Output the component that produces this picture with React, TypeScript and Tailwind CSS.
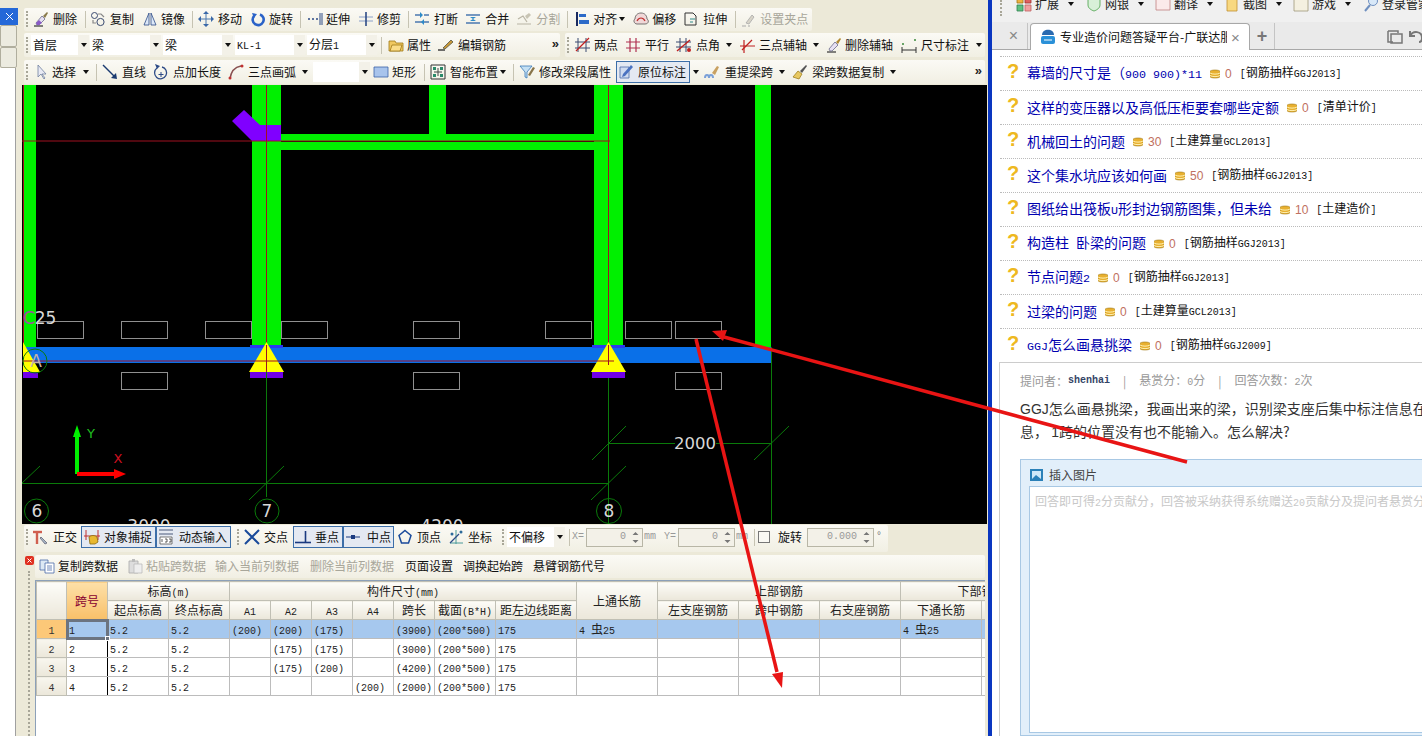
import React from "react";

const s = (d: string, c = "#2c4a86", w = 1.2) => <path d={d} stroke={c} strokeWidth={w} fill="none" />;
const f = (d: string, c: string, st = "none") => <path d={d} fill={c} stroke={st} strokeWidth={0.8} />;

const ic: Record<string, React.ReactNode> = {
  del: <>{s("M1 15h9", "#333")}{f("M3 12l6-7 3 3-6 6H4z", "#e6e0f2", "#6a6a8a")}{f("M3 12l3-3 3 3-3 2H4z", "#8a5ac8")}{f("M10 5l4-4 1 1-3 5z", "#8a7a4a")}</>,
  copy: <><circle cx="4.5" cy="4.5" r="3" stroke="#3a4a70" />{s("M8 3h3l3 3", "#888")}<circle cx="10.5" cy="11" r="3.6" stroke="#3a4a70" />{s("M3 9v3h3", "#888")}</>,
  mirror: <>{f("M7 2L2 14h5z", "#dce8f8", "#2c4a86")}{f("M9 2l5 12H9z", "#dce8f8", "#2c4a86")}</>,
  move: <>{s("M8 2v12M2 8h12", "#4a78b0", 1)}{f("M8 0l3 3H5zM8 16l-3-3h6zM0 8l3-3v6zM16 8l-3 3V5z", "#3a68a8")}</>,
  rotate: <>{s("M4 5a5.5 5.5 0 1 0 6-1.6", "#2a62c8", 2.6)}{f("M2 2l5 1-3 4z", "#2a62c8")}</>,
  extend: <>{s("M1 8h2M5 8h2M9 8h2", "#2c4a86", 1.6)}{s("M13 2v12M15 2v12", "#2c4a86", 1)}</>,
  trim: <>{s("M1 6h14M1 10h14", "#8aa0c8", 1)}{s("M8 1v14", "#2c4a86", 1.6)}</>,
  brk: <>{s("M1 4h5M10 4h5M1 11h14", "#4a78b0", 1.5)}{f("M6 1l3 3-3 3zM10 8l-3 3 3 3z", "#2c8ac8")}</>,
  merge: <>{s("M1 4h14M1 12h14", "#4a78b0", 1.5)}{f("M5 6l3 2 3-2zM5 10l3-2 3 2z", "#2c8ac8")}</>,
  split: <>{s("M1 13h14M2 8l5-3 4 6", "#b8b4a4", 1.2)}{f("M9 5l4-3 2 2-4 4z", "#c8c4b4")}</>,
  align: <>{f("M2 1h2v14H2z", "#1a2a60")}{f("M5 3h7v3H5z", "#2c6ac8")}{f("M5 9h10v4H5z", "#2c6ac8")}</>,
  offset: <>{f("M8 2c4 0 6 3 6 6 2 1 2 5-2 5H4c-3 0-4-4-2-5 0-3 2-6 6-6z", "#f0d8d8", "#555")}{s("M4 10c2-4 6-4 8 0", "#c03030")}</>,
  stretch: <>{s("M2 2h8l3 3v9H2z", "#333", 1)}{s("M7 8h5M7 11h3", "#2c8a8a", 1)}</>,
  grip: <>{s("M1 15h4M7 15h2", "#aaa")}{f("M5 12l6-8 2 2-5 7z", "#d8d4c8", "#aaa")}</>,
  attr: <>{f("M1 4h6l1 2h7v8H1z", "#f0c860", "#a07818")}{f("M4 8h10l-2 6H2z", "#fadc88", "#a07818")}</>,
  rebar: <>{s("M0 13h7", "#333", 1.4)}{f("M5 11l8-8 2 2-8 7z", "#c89838", "#554")}</>,
  twop: <>{s("M3 1v14M11 1v14M0 5h15M0 11h15", "#3a4a70", 1)}{s("M1 14L14 1", "#c02020", 1.2)}</>,
  par: <>{s("M5 1v14M11 1v14M1 5h14M1 11h14", "#b03050", 1.2)}</>,
  ang: <>{s("M4 1v14M10 1v14M0 5h15M0 10h15", "#3a4a70", 1)}{s("M1 14L14 3", "#c02020", 1.4)}<circle cx="13" cy="13" r="2" fill="#c02020" /></>,
  tri: <>{s("M5 3v13M1 9h15", "#c02020", 1.2)}{s("M3 13L13 3", "#c02020", 1.2)}</>,
  delaxis: <>{s("M1 15h9", "#333")}{f("M3 12l6-7 3 3-6 6H4z", "#e6e0f2", "#6a6a8a")}{f("M10 5l4-4 1 1-3 5z", "#b08830")}</>,
  dim: <>{s("M1 13h14M1 10v6M15 10v6", "#333", 1)}<circle cx="2" cy="7" r="1" fill="#3a8a3a" /><circle cx="14" cy="3" r="1" fill="#3a8a3a" /></>,
  select: <>{f("M4 1v12l3-3 3 5 1-1-3-4h4z", "#e8eaf4", "#7080a0")}</>,
  line: <>{s("M1 1l12 12", "#1a3a70", 1.4)}{f("M15 15l-6-1 5-5z", "#1a3a70")}</>,
  ptlen: <>{s("M4 4a6 6 0 1 0 5-1", "#2c4a86", 1.3)}{f("M2 0l5 2-3 3z", "#2c4a86")}{s("M8 8v5M5.5 10.5h5", "#2c4a86", 1)}</>,
  arc: <>{s("M2 15C3 7 7 3 13 2", "#885050", 1.5)}<circle cx="2" cy="14" r="1.5" fill="#c03030" /><circle cx="14" cy="2" r="1.5" fill="#c03030" /></>,
  rect: <>{f("M1 3h14v10H1z", "#a8c4ec", "#3a62a8")}</>,
  smart: <>{s("M1 1h14v14H1z", "#333", 1)}{f("M3 3h3v3H3zM10 3h3v3h-3zM3 10h3v3H3zM10 10h3v3h-3z", "#2a8a6a")}{s("M8 4v8M4 8h8", "#444", 1)}</>,
  filter: <>{f("M1 2h12L8 8v6l-2-1V8z", "#c4e0f4", "#3a7ab8")}{f("M9 11l5-8 2 1-5 8z", "#88744a")}</>,
  mark: <>{f("M2 3h9v11H2z", "#d0dcf0", "#4a6aa8")}{f("M5 10l8-9 2 2-8 9-3 1z", "#4a72c0")}</>,
  span: <>{s("M1 14c0-4 4-4 4 0M5 14c0-4 4-4 4 0", "#7aa0d8", 2)}{f("M8 9l5-7 2 1-4 8z", "#c8a060")}</>,
  broom: <>{f("M1 13l5-6 4 3-3 5z", "#e8c860", "#a08020")}{f("M8 7l6-6 1 1-5 7z", "#555")}</>,
  ortho: <>{s("M4 4v11", "#d06050", 2.4)}{s("M0 3h9", "#d06050", 2.4)}{f("M8 8l6 6-2 1-5-6z", "#a8b8c8", "#667")}</>,
  snap: <>{s("M2 1v10M14 1v10M0 7h16", "#c03030", 1)}{f("M5 8c2-2 6-2 8 0l1 5-3 2H6z", "#e8b830", "#8a6a10")}</>,
  dyn: <>{s("M1 1h14M1 5h14", "#4a5a7a", 1.2)}{f("M2 8h12v7H2z", "#fff", "#555")}{s("M4 13v-3M7 10h2v3H7M11 10h2v3h-2", "#333", 0.8)}</>,
  cross: <>{s("M1 1l14 14M15 1L1 15", "#1a4a9a", 2)}</>,
  perp: <>{s("M0 13.5h16", "#1a3a80", 1.6)}{s("M10.5 2v11", "#1a3a80", 1.6)}</>,
  mid: <>{s("M1 8h14", "#1a3a80", 1)}{f("M6 6h4v4H6z", "#1a3a80")}</>,
  vert: <>{s("M8 1.5l6 5-2.5 7.5h-7L2 6.5z", "#1a4a9a", 1.5)}</>,
  coord: <>{s("M2 14h13M8 1v14", "#4a9a9a", 1)}{s("M2 14l9-9", "#2c4a86", 1.2)}<circle cx="13" cy="3" r="1.5" fill="#2c6a9a" /><circle cx="4" cy="5" r="1.5" fill="#2c6a9a" /></>,
  pcopy: <>{f("M1 2h8v10H1z", "#dce8f4", "#4a6aa8")}{f("M6 5h9v10H6z", "#fff", "#4a6aa8")}{s("M8 8h5M8 10h5M8 12h5", "#4a6aa8", 0.8)}</>,
  paste: <>{f("M2 3h9v12H2z", "#ddd", "#aaa")}{f("M5 1h3v3H5z", "#bbb")}{f("M7 6h8v9H7z", "#eee", "#bbb")}</>,
};

const Ico = ({ n }: { n: string }) => (
  <svg className="w-4 h-4 shrink-0" viewBox="0 0 16 16" fill="none">{ic[n]}</svg>
);

const Tx = ({ t }: { t: string }) => (
  <>
    {t.split(/([\x20-\x7e]+)/).map((p, i) =>
      /^[\x20-\x7e]+$/.test(p) ? (
        <span key={i} className="font-['Liberation_Mono'] text-[0.833em] whitespace-pre">{p}</span>
      ) : (
        <span key={i}>{p}</span>
      )
    )}
  </>
);

const Cell = ({ t }: { t: string }) => (
  <div className="h-[18px] leading-[17px] overflow-hidden whitespace-nowrap"><Tx t={t} /></div>
);

const Grip = ({ c = "" }: { c?: string }) => <div className={`w-[2px] h-[16px] shrink-0 border-l-2 border-dotted border-[#a8a698] ${c}`} />;
const Sep = ({ c = "" }: { c?: string }) => <div className={`w-px h-[17px] shrink-0 bg-[#c6c3b2] ${c}`} />;
const Caret = ({ c = "" }: { c?: string }) => (
  <svg className={`w-2 h-2 shrink-0 ${c}`} viewBox="0 0 8 8"><path d="M1 2h6L4 6z" fill="#111" /></svg>
);
const T = ({ i, t, c = "", dis }: { i: string; t: string; c?: string; dis?: boolean }) => (
  <div className={`flex items-center shrink-0 whitespace-nowrap ${dis ? "text-[#a8a69a]" : "text-[#111]"} ${c}`}>
    <Ico n={i} />
    <span>{t}</span>
  </div>
);
const Sel = ({ t, c }: { t: string; c: string }) => (
  <div className={`flex h-[20px] items-center shrink-0 bg-white ${c}`}>
    <span className="flex-1 pl-[2px] text-[#111] whitespace-nowrap"><Tx t={t} /></span>
    <div className="w-[11px] h-full flex items-center justify-center bg-[#f3f1e8]"><Caret /></div>
  </div>
);
const Chev = ({ c = "" }: { c?: string }) => (
  <span className={`font-['Liberation_Sans'] font-bold text-[13px] leading-none mb-1 text-[#222] ${c}`}>»</span>
);
const Btn = ({ i, t, c }: { i: string; t: string; c: string }) => (
  <div className={`flex items-center h-[22px] shrink-0 whitespace-nowrap border border-[#3c6ea8] bg-[#e4e9f2] text-[#111] ${c}`}>
    <Ico n={i} />
    <span>{t}</span>
  </div>
);
const Spin = ({ v, c }: { v: string; c: string }) => (
  <div className={`flex items-center h-[19px] shrink-0 border border-[#b8b6a6] bg-[#f3f1e8] text-[#999] ${c}`}>
    <span className="flex-1 text-right font-['Liberation_Mono'] text-[10px]">{v}</span>
    <svg className="w-[13px] h-[15px] ml-[3px]" viewBox="0 0 13 15"><path d="M6.5 2l3 3h-6zM6.5 13l-3-3h6z" fill="#777" /></svg>
  </div>
);

const bar = "bg-linear-to-b from-[#fbfaf5] to-[#f1efe3] rounded-[2px]";

function Sliver() {
  return (
    <div className="w-[22px] shrink-0 flex flex-col">
      <div className="h-[8px]" />
      <div className="w-[18px] h-[17px] bg-[#2468d8] text-white flex items-center justify-center">
        <svg className="w-[9px] h-[9px]" viewBox="0 0 9 9"><path d="M1 1l7 7M8 1L1 8" stroke="#fff" /></svg>
      </div>
      <div className="w-[17px] h-[22px] bg-[#ecebe0] border border-[#b0ae9e] rounded-[2px]" />
      <div className="w-[17px] h-[21px] bg-[#ecebe0] border border-[#b0ae9e] rounded-[2px]" />
      <div className="w-[16px] flex-1 bg-white border-r border-[#a0a0a0]" />
    </div>
  );
}

function Toolbars() {
  return (
    <div className="h-[85px] pt-[8px] flex flex-col pl-[2px]">
      <div className={`h-[23px] pb-[1px] w-[788px] flex items-center ${bar}`}>
        <Grip c="ml-[2px]" />
        <T i="del" t="删除" c="ml-[5px] gap-[4px]" />
        <Sep c="ml-[8px]" />
        <T i="copy" t="复制" c="ml-[4px] gap-[4px]" />
        <T i="mirror" t="镜像" c="ml-[8px] gap-[3px]" />
        <Sep c="ml-[7px]" />
        <T i="move" t="移动" c="ml-[5px] gap-[4px]" />
        <T i="rotate" t="旋转" c="ml-[8px] gap-[3px]" />
        <Sep c="ml-[7px]" />
        <T i="extend" t="延伸" c="ml-[6px] gap-[3px]" />
        <T i="trim" t="修剪" c="ml-[8px] gap-[3px]" />
        <Sep c="ml-[7px]" />
        <T i="brk" t="打断" c="ml-[5px] gap-[4px]" />
        <T i="merge" t="合并" c="ml-[7px] gap-[4px]" />
        <T i="split" t="分割" c="ml-[7px] gap-[4px]" dis />
        <Sep c="ml-[7px]" />
        <T i="align" t="对齐" c="ml-[6px] gap-[3px]" />
        <Caret c="ml-[1px]" />
        <T i="offset" t="偏移" c="ml-[7px] gap-[3px]" />
        <T i="stretch" t="拉伸" c="ml-[7px] gap-[4px]" />
        <Sep c="ml-[8px]" />
        <T i="grip" t="设置夹点" c="ml-[5px] gap-[3px]" dis />
      </div>
      <div className="h-[24px] mt-[2px] flex">
        <div className={`w-[536px] flex items-center ${bar}`}>
          <Grip c="ml-[2px]" />
          <Sel t="首层" c="ml-[3px] w-[58px]" />
          <Sel t="梁" c="ml-[1px] w-[71px]" />
          <Sel t="梁" c="ml-[2px] w-[70px]" />
          <Sel t="KL-1" c="ml-[2px] w-[70px]" />
          <Sel t="分层1" c="ml-[2px] w-[70px]" />
          <Sep c="ml-[4px]" />
          <T i="attr" t="属性" c="ml-[6px] gap-[3px]" />
          <T i="rebar" t="编辑钢筋" c="ml-[7px] gap-[4px]" />
          <Chev c="ml-auto mr-[1px]" />
        </div>
        <div className={`w-[420px] ml-[5px] flex items-center ${bar}`}>
          <Grip c="ml-[2px]" />
          <T i="twop" t="两点" c="ml-[6px] gap-[3px]" />
          <T i="par" t="平行" c="ml-[7px] gap-[4px]" />
          <T i="ang" t="点角" c="ml-[7px] gap-[4px]" />
          <Caret c="ml-[5px]" />
          <T i="tri" t="三点辅轴" c="ml-[6px] gap-[4px]" />
          <Caret c="ml-[5px]" />
          <T i="delaxis" t="删除辅轴" c="ml-[6px] gap-[3px]" />
          <T i="dim" t="尺寸标注" c="ml-[8px] gap-[4px]" />
          <Caret c="ml-[6px]" />
        </div>
      </div>
      <div className={`h-[24px] mt-[3px] w-[961px] flex items-center ${bar}`}>
        <Grip c="ml-[2px]" />
        <T i="select" t="选择" c="ml-[6px] gap-[2px]" />
        <Caret c="ml-[6px]" />
        <Sep c="ml-[6px]" />
        <T i="line" t="直线" c="ml-[5px] gap-[4px]" />
        <T i="ptlen" t="点加长度" c="ml-[7px] gap-[4px]" />
        <T i="arc" t="三点画弧" c="ml-[7px] gap-[4px]" />
        <Caret c="ml-[5px]" />
        <Sel t="" c="ml-[4px] w-[57px]" />
        <T i="rect" t="矩形" c="ml-[3px] gap-[3px]" />
        <Sep c="ml-[8px]" />
        <T i="smart" t="智能布置" c="ml-[5px] gap-[4px]" />
        <Caret c="ml-[1px]" />
        <Sep c="ml-[6px]" />
        <T i="filter" t="修改梁段属性" c="ml-[5px] gap-[4px]" />
        <Btn i="mark" t="原位标注" c="ml-[5px] w-[74px] gap-[4px] pl-[1px]" />
        <Caret c="ml-[2px]" />
        <T i="span" t="重提梁跨" c="ml-[4px] gap-[5px]" />
        <Caret c="ml-[5px]" />
        <T i="broom" t="梁跨数据复制" c="ml-[6px] gap-[4px]" />
        <Caret c="ml-[5px]" />
        <Chev c="ml-auto mr-[3px]" />
      </div>
    </div>
  );
}

const GREEN = "#00f000";
const GL = "#0a7a0a";
const RL = "#a01020";

function Canvas() {
  const rectsTop = [37, 121, 205, 281, 413, 545, 625, 675];
  const rectsBot = [121, 413, 675];
  return (
    <svg className="block w-[965px] h-[439px] bg-black" viewBox="22 85 965 439">
      {[[23, 13], [252, 29], [594, 29], [755, 16]].map(([x, w]) => (
        <rect key={x} x={x} y={85} width={w} height={262} fill={GREEN} />
      ))}
      <rect x={429} y={85} width={17} height={50} fill={GREEN} />
      <rect x={281} y={134} width={313} height={7} fill={GREEN} />
      <rect x={281} y={142} width={313} height={8} fill={GREEN} />
      <path d="M232 121l12-11 16 15h21v16h-29z" fill="#8000ff" />
      <path d="M22 141h588" stroke={RL} />
      <path d="M266.5 85v260M608.5 85v260M23.5 85v260" stroke={RL} />
      <rect x={36} y={347} width={735} height={16} fill="#0a70e8" />
      <rect x={23} y={347} width={13} height={16} fill="#0a70e8" />
      {[250, 592].map((x) => (<rect key={x} x={x} y={345} width={33} height={3} fill="#2a3af0" />))}
      {[249, 591].map((x) => (
        <g key={x}>
          <path d={`M${x + 17.5} 342L${x + 35} 372H${x}z`} fill="#ffff00" />
          <rect x={x + 1} y={372} width={33} height={6} fill="#7000e8" />
        </g>
      ))}
      <path d="M23 342l17 30H23z" fill="#ffff00" />
      <rect x={23} y={372} width={15} height={6} fill="#7000e8" />
      <path d="M22 361h592" stroke={RL} />
      <path d="M266.5 345v27M608.5 345v20" stroke={RL} />
      {rectsTop.map((x) => (<rect key={x} x={x + 0.5} y={321.5} width={46} height={17} fill="none" stroke="#909090" />))}
      {rectsBot.map((x) => (<rect key={x} x={x + 0.5} y={372.5} width={46} height={17} fill="none" stroke="#909090" />))}
      <g stroke={GL} fill="none">
        <path d="M266.5 372v125M608.5 378v146M771.5 347v177" />
        <path d="M22 483.5h586M608 443.5h67M716 443.5h55" />
        <path d="M22 483l18-17M249 500l35-34M591 500l35-34M592 460l34-34M754 460l35-34" />
        <circle cx="35" cy="361" r="12" />
        <circle cx="36.5" cy="511" r="12" />
        <circle cx="267" cy="511" r="12" />
        <circle cx="609" cy="511" r="12.5" />
      </g>
      <g fontFamily="DejaVu Sans" textAnchor="middle" fill="#d8d8d8">
        <text x="36" y="367" fontSize="17" fill="#c0b0a8">A</text>
        <text x="37" y="517" fontSize="17">6</text>
        <text x="267" y="517" fontSize="17">7</text>
        <text x="609" y="517" fontSize="17">8</text>
        <text x="695" y="449" fontSize="16.5">2000</text>
        <text x="149" y="532" fontSize="17">3000</text>
        <text x="442" y="532" fontSize="17">4200</text>
        <text x="29" y="324" fontSize="18" fill="#a050a0">C</text>
        <text x="45.5" y="324" fontSize="17">25</text>
        <text x="91" y="438" fontSize="13" fill="#20c020">Y</text>
        <text x="118" y="463" fontSize="13" fill="#d01020">X</text>
      </g>
      <rect x={75} y={436} width={4} height={38} fill={GREEN} />
      <path d="M77 425l-4 12h8z" fill={GREEN} />
      <rect x={77} y={472} width={38} height={4} fill="#ff0000" />
      <path d="M126 474l-12-5v10z" fill="#ff0000" />
    </svg>
  );
}

function SnapBar() {
  return (
    <div className="h-[27px] mt-[1px] flex items-center ml-[2px]">
      <div className={`h-full w-[864px] pb-[3px] flex items-center ${bar}`}>
        <Grip c="ml-[2px]" />
        <T i="ortho" t="正交" c="ml-[5px] gap-[4px]" />
        <Btn i="snap" t="对象捕捉" c="ml-[4px] w-[75px] gap-[4px] pl-[2px]" />
        <Btn i="dyn" t="动态输入" c="w-[75px] gap-[5px] pl-[1px]" />
        <Grip c="ml-[6px]" />
        <T i="cross" t="交点" c="ml-[5px] gap-[4px]" />
        <Btn i="perp" t="垂点" c="ml-[5px] w-[50px] gap-[4px] pl-[1px]" />
        <Btn i="mid" t="中点" c="w-[51px] gap-[6px] pl-[1px]" />
        <T i="vert" t="顶点" c="ml-[3px] gap-[4px]" />
        <T i="coord" t="坐标" c="ml-[7px] gap-[4px]" />
        <Grip c="ml-[10px]" />
        <Sel t="不偏移" c="ml-[3px] w-[58px]" />
        <Sep c="ml-[4px]" />
        <span className="ml-[2px] w-[12px] text-[#999] font-['Liberation_Mono'] text-[10px]">X=</span>
        <Spin v="0" c="ml-[2px] w-[57px]" />
        <span className="w-[14px] ml-[1px] text-[#999] font-['Liberation_Mono'] text-[10px]">mm</span>
        <span className="ml-[6px] w-[12px] text-[#999] font-['Liberation_Mono'] text-[10px]">Y=</span>
        <Spin v="0" c="ml-[2px] w-[57px]" />
        <span className="w-[14px] ml-[1px] text-[#999] font-['Liberation_Mono'] text-[10px]">mm</span>
        <Sep c="ml-[4px]" />
        <div className="ml-[3px] w-[12px] h-[12px] border border-[#777] bg-[#faf9f4] shrink-0" />
        <span className="ml-[8px] text-[#111] shrink-0">旋转</span>
        <Spin v="0.000" c="ml-[5px] w-[67px]" />
        <span className="ml-[2px] text-[#777] text-[10px] font-['Liberation_Mono']">°</span>
      </div>
    </div>
  );
}

const th = "border border-[#c0bfb4] bg-linear-to-b from-[#fdfcf8] to-[#ebe7da] font-normal text-[#222] text-center p-0 overflow-hidden whitespace-nowrap";
const td = "border border-[#bcbcbc] p-0 pl-[2px] text-[#222] overflow-hidden whitespace-nowrap";
const rows = [
  ["1", "5.2", "5.2", "(200)", "(200)", "(175)", "", "(3900)", "(200*500)", "175", "4 虫25", "", "", "", "4 虫25", ""],
  ["2", "5.2", "5.2", "", "(175)", "(175)", "", "(3000)", "(200*500)", "175", "", "", "", "", "", ""],
  ["3", "5.2", "5.2", "", "(175)", "(200)", "", "(4200)", "(200*500)", "175", "", "", "", "", "", ""],
  ["4", "5.2", "5.2", "", "", "", "(200)", "(2000)", "(200*500)", "175", "", "", "", "", "", ""],
];

function Grid() {
  return (
    <div className="mt-[2px] flex-1 bg-white border-t border-l border-[#8ca0b8] overflow-hidden">
      <table className="table-fixed border-collapse w-[1026px] text-[12px]">
        <colgroup>
          <col className="w-[30px]" />
          <col className="w-[41px]" />
          <col className="w-[61px]" />
          <col className="w-[61px]" />
          <col className="w-[41px]" />
          <col className="w-[41px]" />
          <col className="w-[41px]" />
          <col className="w-[41px]" />
          <col className="w-[41px]" />
          <col className="w-[61px]" />
          <col className="w-[81px]" />
          <col className="w-[81px]" />
          <col className="w-[81px]" />
          <col className="w-[81px]" />
          <col className="w-[81px]" />
          <col className="w-[81px]" />
          <col className="w-[81px]" />
        </colgroup>
        <thead>
          <tr className="h-[19px]">
            <th rowSpan={2} className={th} />
            <th rowSpan={2} className="border border-[#c0bfb4] bg-linear-to-b from-[#fde0a8] to-[#f8c068] font-normal text-[#880030] p-0">跨号</th>
            <th colSpan={2} className={th}><Cell t="标高(m)" /></th>
            <th colSpan={7} className={th}><Cell t="构件尺寸(mm)" /></th>
            <th rowSpan={2} className={th}>上通长筋</th>
            <th colSpan={3} className={th}><Cell t="上部钢筋" /></th>
            <th colSpan={2} className={th}><Cell t="下部钢筋" /></th>
          </tr>
          <tr className="h-[19px]">
            {["起点标高", "终点标高", "A1", "A2", "A3", "A4", "跨长", "截面(B*H)", "距左边线距离", "左支座钢筋", "跨中钢筋", "右支座钢筋", "下通长筋", ""].map((h, i) => (
              <th key={i} className={th}><Cell t={h} /></th>
            ))}
          </tr>
        </thead>
        <tbody>
          {rows.map((r, ri) => (
            <tr key={ri} className={`h-[19px] ${ri === 0 ? "bg-[#a6c8ee]" : "bg-white"}`}>
              <td className={`border border-[#c0bfb4] p-0 text-center text-[#333] ${ri === 0 ? "bg-[#fcc878]" : "bg-linear-to-b from-[#f8f6ee] to-[#ebe7da]"}`}>
                <Cell t={String(ri + 1)} />
              </td>
              {r.map((v, i) => (
                <td
                  key={i}
                  className={
                    i === 0
                      ? ri === 0
                        ? "p-0 pl-[2px] relative outline-[3px] -outline-offset-2 outline-[#6c7480] text-[#222]"
                        : `${td} border-r-black`
                      : td
                  }
                >
                  <Cell t={v} />
                  {i === 0 && ri === 0 && <div className="absolute -right-[3px] -bottom-[3px] w-[5px] h-[5px] bg-[#6c7480] border border-white" />}
                </td>
              ))}
              <td className={td} />
            </tr>
          ))}
        </tbody>
      </table>
    </div>
  );
}

function Panel() {
  return (
    <div className="mt-[3px] flex-1 flex min-h-0">
      <div className="w-[13px] shrink-0 flex flex-col items-center pl-[1px]">
        <svg className="w-[9px] h-[9px] mt-px" viewBox="0 0 9 9">
          <rect width="9" height="9" rx="2" fill="#e03020" />
          <path d="M2.5 2.5l4 4M6.5 2.5l-4 4" stroke="#fff" />
        </svg>
        <div className="w-[2px] flex-1 mt-[6px] border-l-2 border-dotted border-[#a8a698]" />
      </div>
      <div className="w-[950px] shrink-0 flex flex-col min-h-0">
        <div className={`h-[23px] pb-[1px] shrink-0 flex items-center ${bar}`}>
          <T i="pcopy" t="复制跨数据" c="ml-[4px] gap-[3px]" />
          <T i="paste" t="粘贴跨数据" c="ml-[9px] gap-[3px]" dis />
          <span className="ml-[9px] text-[#a8a69a]">输入当前列数据</span>
          <span className="ml-[11px] text-[#a8a69a]">删除当前列数据</span>
          <span className="ml-[11px] text-[#111]">页面设置</span>
          <span className="ml-[10px] text-[#111]">调换起始跨</span>
          <span className="ml-[10px] text-[#111]">悬臂钢筋代号</span>
        </div>
        <Grid />
      </div>
    </div>
  );
}

const BT = ({ ic: icon, t, c = "" }: { ic: React.ReactNode; t: string; c?: string }) => (
  <div className={`flex items-center shrink-0 whitespace-nowrap text-[#222] gap-[3px] ${c}`}>
    <svg className="w-4 h-4 shrink-0" viewBox="0 0 16 16" fill="none">{icon}</svg>
    <span>{t}</span>
  </div>
);

const Coin = () => (
  <svg className="w-[10px] h-[10px] shrink-0" viewBox="0 0 10 10">
    <path d="M0 2.5C0 .5 10 .5 10 2.5v5c0 2-10 2-10 0z" fill="#e8b030" stroke="#a07818" strokeWidth="0.6" />
    <path d="M0 4c2 1.5 8 1.5 10 0M0 6.5c2 1.5 8 1.5 10 0" stroke="#fff0b0" strokeWidth="1" fill="none" />
  </svg>
);

const qs = [
  ["幕墙的尺寸是（900 900)*11", "0", "[钢筋抽样GGJ2013]"],
  ["这样的变压器以及高低压柜要套哪些定额", "0", "[清单计价]"],
  ["机械回土的问题", "30", "[土建算量GCL2013]"],
  ["这个集水坑应该如何画", "50", "[钢筋抽样GGJ2013]"],
  ["图纸给出筏板U形封边钢筋图集，但未给", "10", "[土建造价]"],
  ["构造柱 卧梁的问题", "0", "[钢筋抽样GGJ2013]"],
  ["节点问题2", "0", "[钢筋抽样GGJ2013]"],
  ["过梁的问题", "0", "[土建算量GCL2013]"],
  ["GGJ怎么画悬挑梁", "0", "[钢筋抽样GGJ2009]"],
];

function Browser() {
  return (
    <div className="flex-1 min-w-0 flex flex-col bg-white overflow-hidden">
      <div className="h-[22px] shrink-0 bg-[#f0f0f0] overflow-hidden">
        <div className="h-[8px] flex items-center">
          <Grip c="ml-[8px] mt-[8px]" />
          <BT c="ml-[14px]" ic={<>{f("M1 1h6v6H1z", "#f0b040", "#a07818")}{f("M9 1h6v6H9z", "#e06060", "#a03030")}{f("M1 9h6v6H1z", "#60c080", "#308050")}{f("M9 9h6v6H9z", "#f0a0a0", "#c06060")}</>} t="扩展" />
          <Caret c="ml-[8px]" />
          <BT c="ml-[11px]" ic={<>{f("M8 1l6 2v6c0 3-3 5-6 6-3-1-6-3-6-6V3z", "#d8f0d8", "#48a048")}</>} t="网银" />
          <Caret c="ml-[8px]" />
          <BT c="ml-[10px]" ic={<>{f("M1 2h14v12H1z", "#fbeaea", "#c08080")}</>} t="翻译" />
          <Caret c="ml-[8px]" />
          <BT c="ml-[10px]" ic={<>{f("M3 1h10v14H3z", "#f8d880", "#c09030")}</>} t="截图" />
          <Caret c="ml-[8px]" />
          <BT c="ml-[10px]" ic={<>{f("M1 1h14v14H1z", "#f4f0e0", "#a09878")}</>} t="游戏" />
          <Caret c="ml-[8px]" />
          <BT c="ml-[11px]" ic={<><circle cx="10" cy="5" r="4.5" fill="#d8e8f8" stroke="#7090c0" />{s("M7 9l-5 6", "#7090c0", 2)}</>} t="登录管家" />
        </div>
      </div>
      <div className="h-[28px] shrink-0 bg-[#eaeaea] border-b border-[#a8a8a8] flex items-end text-[12px]">
        <div className="w-[36px] h-[26px] shrink-0 flex items-center justify-end pr-[9px] border-r border-[#c4c4c4] text-[#888] text-[16px] font-['Liberation_Sans']">×</div>
        <div className="ml-[2px] w-[220px] h-[27px] -mb-px bg-white border border-b-0 border-[#a8a8a8] rounded-t-[4px] flex items-center shrink-0 pl-[9px] overflow-hidden">
          <svg className="w-[16px] h-[16px] shrink-0" viewBox="0 0 16 16">
            <path d="M2 6c0-7 12-7 12 0z" fill="#2a6ab0" /><rect x="1" y="7" width="14" height="8" rx="2" fill="#2a90d8" /><path d="M4 11h8" stroke="#fff" />
          </svg>
          <span className="ml-[4px] w-[167px] overflow-hidden whitespace-nowrap text-[#111]">专业造价问题答疑平台-广联达服务</span>
          <span className="ml-[4px] text-[#888] text-[15px] leading-none font-['Liberation_Sans']">×</span>
        </div>
        <div className="w-[25px] h-[26px] shrink-0 flex items-center justify-center border-r border-[#c4c4c4] text-[#777] font-['Liberation_Sans'] font-bold text-[18px]">+</div>
        <div className="flex-1 h-[26px] flex items-center justify-end gap-[5px] overflow-hidden">
          <svg className="w-[16px] h-[16px] shrink-0" viewBox="0 0 16 16" fill="none"><path d="M1 3h10v2M1 3v11h5M4 6h11v9H4z" stroke="#777" strokeWidth="1.5" /></svg>
          <svg className="w-[17px] h-[16px] shrink-0 -mr-[3px]" viewBox="0 0 17 16" fill="none"><path d="M2 3v5h5M2 8c3-6 12-5 12 2 0 2-1 4-3 4" stroke="#777" strokeWidth="2" /></svg>
        </div>
      </div>
      <div className="h-[6px] shrink-0" />
      {qs.map(([t, n, cat]) => (
        <div key={t} className="h-[34px] shrink-0 ml-[8px] border-t border-dotted border-[#bbb] flex items-center whitespace-nowrap">
          <span className="w-[26px] pl-[7px] -mt-[5px] text-[#eeb820] font-bold text-[20px] leading-none font-['Liberation_Sans'] shrink-0">?</span>
          <span className="text-[14px] text-[#0000b0] ml-[1px] -mt-px"><Tx t={t} /></span>
          <span className="ml-[8px]"><Coin /></span>
          <span className="ml-[5px] text-[12px] text-[#c07060] font-['Liberation_Sans']">{n}</span>
          <span className="ml-[8px] text-[12px] text-[#111]"><Tx t={cat} /></span>
        </div>
      ))}
      <div className="flex-1 min-h-0 ml-[7px] border-t border-l border-[#ccc] pl-[20px] pt-[11px] flex flex-col overflow-hidden">
        <div className="h-[14px] shrink-0 flex items-center text-[12px] text-[#999] whitespace-nowrap">
          <span>提问者：</span>
          <span className="font-['Liberation_Mono'] text-[10px] font-bold text-[#334466]">shenhai</span>
          <span className="ml-[13px]">|</span>
          <span className="ml-[13px]"><Tx t="悬赏分：0分" /></span>
          <span className="ml-[13px]">|</span>
          <span className="ml-[13px]"><Tx t="回答次数：2次" /></span>
        </div>
        <div className="mt-[9px] text-[14px] leading-[23px] text-[#333] whitespace-nowrap shrink-0">
          <div className="h-[23px]"><span className="font-['Liberation_Sans']">GGJ</span>怎么画悬挑梁，我画出来的梁，识别梁支座后集中标注信息在原位标注信</div>
          <div className="h-[23px]">息， <span className="font-['Liberation_Sans']">1</span>跨的位置没有也不能输入。怎么解决?</div>
        </div>
        <div className="mt-[16px] flex-1 min-h-0 w-[500px] bg-[#e2effa] border border-[#a8c8e4] flex flex-col pl-[8px] pb-[2px]">
          <div className="h-[26px] pt-[3px] shrink-0 flex items-center text-[12px] text-[#444]">
            <svg className="w-[13px] h-[12px] ml-[1px] shrink-0" viewBox="0 0 13 12">
              <rect width="13" height="12" fill="#2a80b8" /><rect x="2" y="2" width="9" height="8" fill="#cfe8f8" /><path d="M2 10l4-4 5 4z" fill="#2a80b8" />
            </svg>
            <span className="ml-[6px]">插入图片</span>
          </div>
          <div className="flex-1 bg-white border border-[#a8c8e4] pl-[5px] pt-[6px] text-[12px] text-[#c8c8c8] whitespace-nowrap overflow-hidden">
            回答即可得<span className="font-['Liberation_Mono'] text-[10px]">2</span>分贡献分，回答被采纳获得系统赠送<span className="font-['Liberation_Mono'] text-[10px]">20</span>贡献分及提问者悬赏分
          </div>
        </div>
      </div>
    </div>
  );
}

export default function App() {
  return (
    <div className="relative flex w-[1422px] h-[736px] overflow-hidden bg-[#ece9d8] text-[12px] leading-[16px] font-['Noto_Sans_CJK_SC',sans-serif]">
      <Sliver />
      <div className="w-[966px] shrink-0 flex flex-col min-h-0">
        <Toolbars />
        <Canvas />
        <SnapBar />
        <Panel />
      </div>
      <div className="w-[4px] shrink-0 bg-[#0a36c0]" />
      <Browser />
      <svg className="absolute left-0 top-0 w-[1422px] h-[736px] pointer-events-none" viewBox="0 0 1422 736">
        <path d="M1187 462L724 337" stroke="#e81414" strokeWidth="3.5" />
        <path d="M712 331l15-1-4 11z" fill="#e81414" />
        <path d="M696 339L777 672" stroke="#e81414" strokeWidth="3.5" />
        <path d="M782 688l-10-14 11-2z" fill="#e81414" />
      </svg>
    </div>
  );
}
